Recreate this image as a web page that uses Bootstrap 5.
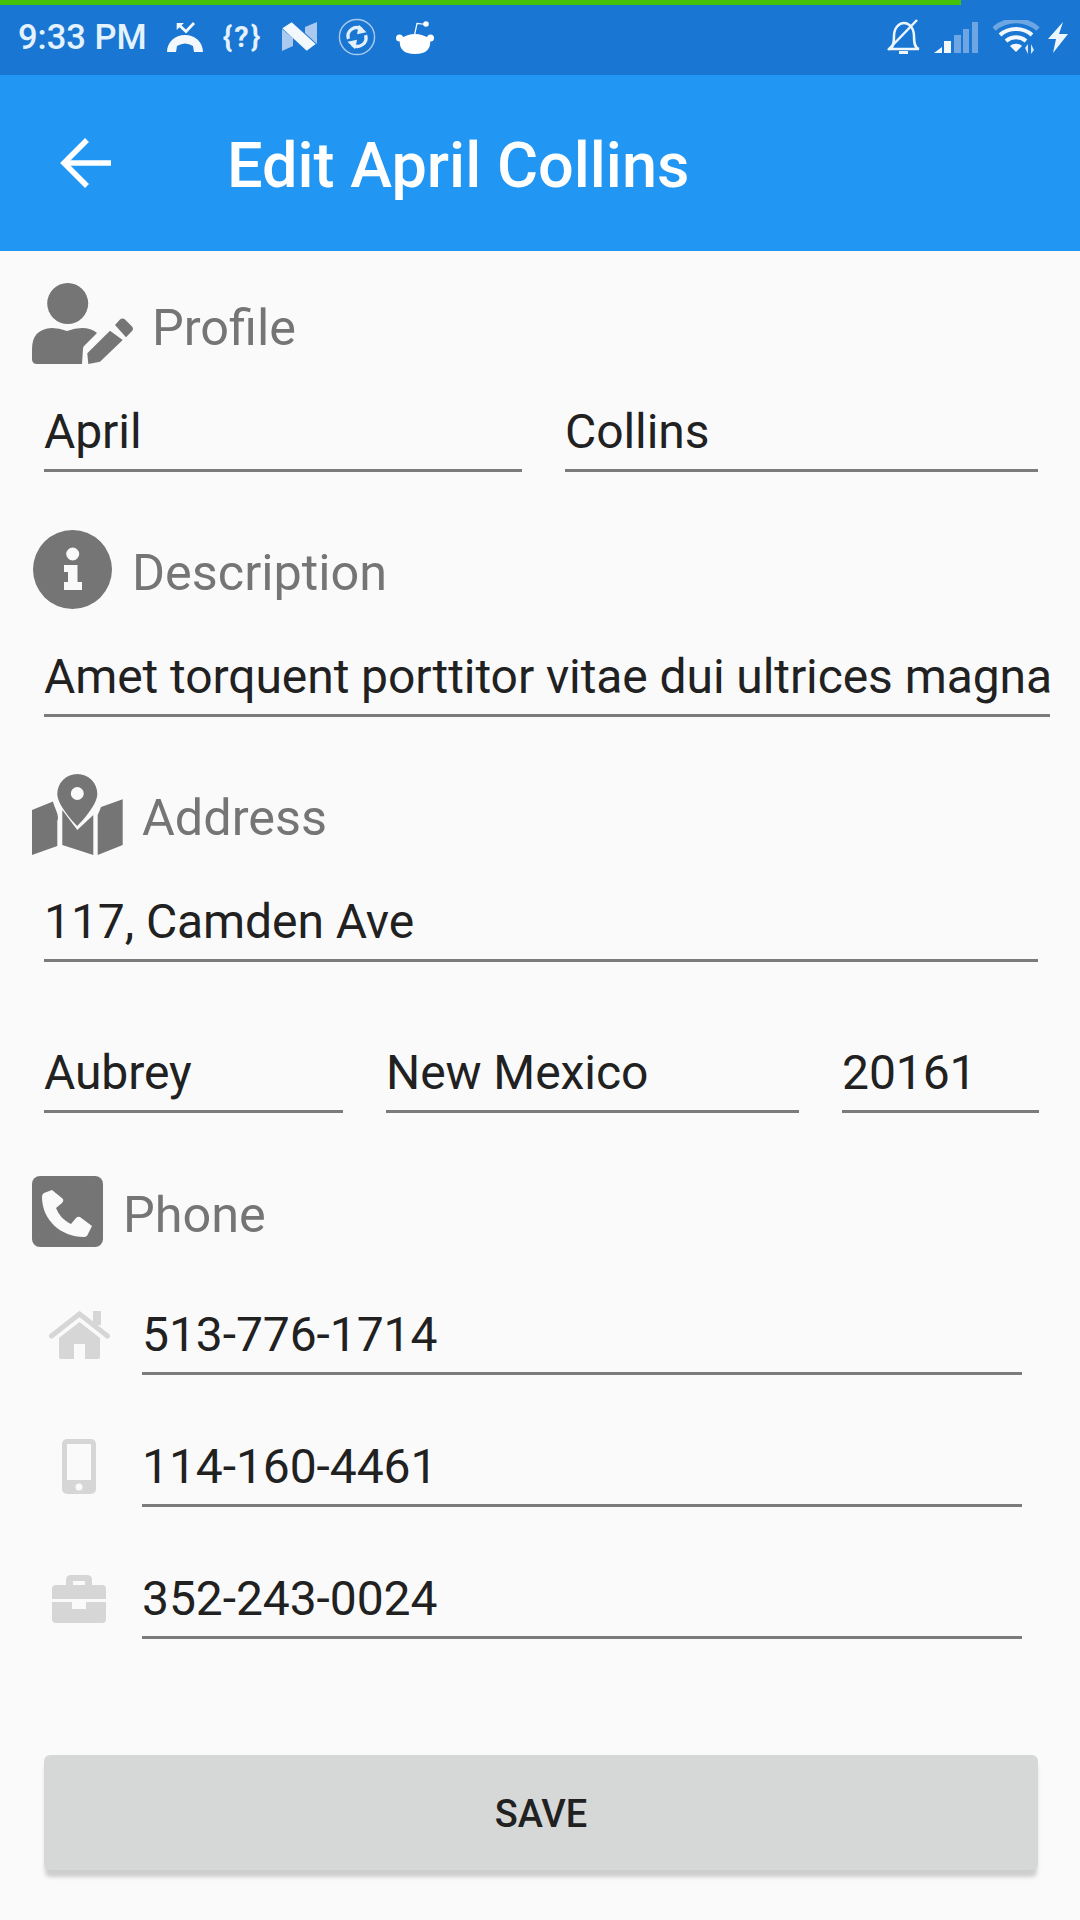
<!DOCTYPE html>
<html lang="en">
<head>
  <meta charset="UTF-8">
  <title>Edit April Collins</title>
  <link href="https://cdn.jsdelivr.net/npm/bootstrap@5.3.0/dist/css/bootstrap.min.css" rel="stylesheet">
  <style>
    body { background: #fafafa; font-family: Roboto, sans-serif; width: 1080px; height: 1920px; overflow: hidden; }
    .status-wrap { background: #1976d2; height: 75px; }
    .load-bar { background: #46c10a; height: 5px; width: 961px; }
    .status-row { height: 70px; padding: 0 12px 6px 18px; color: #e3f2fd; }
    .status-left { gap: 20px; }
    .status-time { font-size: 34.5px; font-weight: 500; line-height: 1; }
    .status-tag { font-size: 29px; font-weight: 700; line-height: 1; letter-spacing: 2px; }
    .gap-sm { margin-left: 8px; }
    .gap-md { margin-left: 13px; }
    .gap-lg { margin-left: 15px; }
    .app-bar { background: #2196f3; height: 176px; padding: 0 0 0 60px; color: #fff; flex-wrap: nowrap; justify-content: flex-start; }
    .app-title { font-size: 63px; font-weight: 500; margin: 5px 0 0 116px; line-height: 1; }
    .sheet { padding: 28px 42px 0 44px; }
    .sec-head { height: 90px; margin-left: -12px; color: #757575; font-size: 50.4px; gap: 20px; }
    .sec-head span { padding-top: 7px; }
    .sec-head svg, .line-icon svg { display: block; }
    .head-info { margin-left: 1px; }
    .head-profile { margin-right: -2px; }
    .head-map { margin-right: -1px; }
    .field-line.form-control { background: transparent; border: 0; border-bottom: 3px solid #7b7b7b; border-radius: 0; padding: 0 0 9px; height: 69px; line-height: 57px; font-size: 48px; letter-spacing: -.08px; color: #212121; white-space: nowrap; box-shadow: none; }
    .gap-fields { gap: 43px; }
    .w-first { width: 478px; flex: none; }
    .w-city { width: 299px; flex: none; }
    .w-state { width: 413px; flex: none; }
    .w-zip { width: 197px; flex: none; }
    .field-line.over-right { width: 1006px; }
    .after-head { margin-top: 34px; }
    .after-field { margin-top: 52px; }
    .after-addr { margin-top: 82px; }
    .head-phone { margin-top: 53px; }
    .phone-line { margin-top: 63px; margin-right: 16px; }
    .phone-line.first-line { margin-top: 50px; }
    .line-icon { width: 98px; flex: none; }
    .icon-home { margin: 5px 0 0 5px; }
    .icon-mobile { margin: 1px 0 0 18px; }
    .icon-case { margin: 5px 0 0 8px; }
    .btn.save-btn { background: #d6d7d7; color: #212121; border: 0; border-radius: 6px; height: 115px; padding-top: 10px; font-size: 38px; font-weight: 500; margin-top: 116px; box-shadow: 0 8px 4px -1px rgba(0,0,0,.18); }
  </style>
</head>
<body>
  <div class="status-wrap">
    <div class="load-bar"></div>
    <div class="status-row d-flex align-items-center">
      <div class="status-left d-flex align-items-center">
        <span class="status-time">9:33 PM</span>
        <svg width="36" height="32" viewBox="0 0 36 32" fill="#f3f8fd"><path d="M11 3L19 10.500L27 2" fill="none" stroke="#f3f8fd" stroke-width="2.800"/><path d="M9.700 2H17L9.700 9z"/><path d="M0 31C0 21 8 14 18 14S36 21 36 31H27L26 25Q18 20 10 25L9 31H0Z"/></svg>
        <span class="status-tag">{?}</span>
        <svg width="36" height="30" viewBox="0 0 36 30"><path d="M0 7V29L11 24V16Z" fill="#a9c9ee"/><path d="M23 5L35 0V22L23 11Z" fill="#a9c9ee"/><path d="M0.300 6.300L9.700 0.300L33.700 22L24.700 28.700Z" fill="#f3f8fd"/></svg>
        <svg width="38" height="38" viewBox="0 0 40 40" fill="none"><circle cx="20" cy="20" r="18.500" stroke="#a9c9ee" stroke-width="1.500"/><path d="M11 22a9 9 0 0 1 14-10" stroke="#e3f0fc" stroke-width="3.500"/><path d="M22 7l8 8-10 2z" fill="#e3f0fc"/><path d="M29 18a9 9 0 0 1-14 10" stroke="#e3f0fc" stroke-width="3.500"/><path d="M18 33l-8-8 10-2z" fill="#e3f0fc"/></svg>
        <svg width="38" height="33" viewBox="0 0 38 33" fill="#fff"><path d="M4 18Q19 8 34 18Q36 33 19 33Q2 33 4 18Z"/><circle cx="3.500" cy="17" r="3.500"/><circle cx="34.500" cy="17" r="3.500"/><path d="M18.500 14L21 2.500L30 3.500" fill="none" stroke="#fff" stroke-width="1.200"/><circle cx="30" cy="3" r="2.800"/></svg>
      </div>
      <svg class="ms-auto" width="34" height="36" viewBox="0 0 34 36" fill="none" stroke="#eef6fd" stroke-width="2.500"><path d="M2 30c4-1 5-5 5-13 0-8 5-13 10-13s10 5 10 13c0 8 1 12 5 13z"/><path d="M1 31L30 1"/><path d="M12 33.500h9" stroke-width="3"/></svg>
      <svg class="gap-md" width="44" height="31" viewBox="0 0 44 31"><path d="M0 31l8-6v6z" fill="#f3f8fd"/><rect x="10" y="19" width="7" height="12" fill="#f3f8fd"/><rect x="20" y="13" width="7" height="18" fill="#6ea6e3"/><rect x="29" y="7" width="6" height="24" fill="#6ea6e3"/><rect x="38" y="0" width="6" height="31" fill="#6ea6e3"/></svg>
      <svg class="gap-lg" width="47" height="34" viewBox="0 0 47 34" fill="none"><path d="M1 9c12-11 32-11 44 0" stroke="#6ea6e3" stroke-width="5"/><path d="M7 15c9-8 23-8 32 0" stroke="#f3f8fd" stroke-width="4"/><path d="M13 21c6-5 14-5 20 0" stroke="#f3f8fd" stroke-width="4"/><path d="M23 32l-6-6c3-3 9-3 12 0z" fill="#f3f8fd"/><path d="M35 34V24l-3 4zM38 24v10l3-4z" fill="#d6e7f8"/></svg>
      <svg class="gap-sm" width="20" height="31" viewBox="0 0 20 31" fill="#eef6fd"><path d="M15 0L0 17h8L5 31 20 12h-9z"/></svg>
    </div>
  </div>

  <nav class="navbar app-bar">
    <svg width="51" height="50" viewBox="0 0 51 50" fill="none" stroke="#fff" stroke-width="5.500"><path d="M51 25H4"/><path d="M27 2L4 25l23 23"/></svg>
    <span class="app-title">Edit April Collins</span>
  </nav>

  <div class="sheet">
    <div class="sec-head d-flex align-items-center">
      <svg class="head-profile" width="102" height="82" viewBox="0 0 102 82" fill="#757575">
        <circle cx="35.700" cy="20.500" r="20.500"/>
        <path d="M0 76V66Q0 46 20 45Q27 45 35 48Q43 45 50 45Q59 45 65 50L52 63Q51 64 51 66L50 81H5Q0 81 0 76Z"/>
        <path d="M55.300 70.300L78 47.700L90.700 57L68 78.700L56.300 81Z"/>
        <path d="M83 42L88 36.500Q90.500 34.500 93 36.500L100 43.500Q102 46 100 48L94 54.300Z"/>
      </svg>
      <span>Profile</span>
    </div>
    <div class="d-flex gap-fields after-head">
      <div class="form-control field-line w-first">April</div>
      <div class="form-control field-line flex-fill">Collins</div>
    </div>

    <div class="sec-head d-flex align-items-center after-field">
      <svg class="head-info" width="79" height="79" viewBox="0 0 79 79" fill="#757575">
        <path fill-rule="evenodd" d="M39.500 0a39.500 39.500 0 1 0 0 79a39.500 39.500 0 1 0 0-79zM39.700 17.500a6.500 6.500 0 1 1 0 13a6.500 6.500 0 1 1 0-13zM31 35H44.500V52H49V60H31V52H35V42H31Z"/>
      </svg>
      <span>Description</span>
    </div>
    <div class="form-control field-line over-right after-head">Amet torquent porttitor vitae dui ultrices magna</div>

    <div class="sec-head d-flex align-items-center after-field">
      <svg class="head-map" width="91" height="81" viewBox="0 0 91 81" fill="#757575">
        <path fill-rule="evenodd" d="M45.300 0a20 20 0 0 1 20 20c0 10-14 26-20 32c-6-6-20-22-20-32a20 20 0 0 1 20-20zM45.300 13a6.500 6.500 0 1 0 0 13a6.500 6.500 0 1 0 0-13z"/>
        <path d="M0 36L21 27.500C22 33 28 42 25.300 47V72L0 81Z"/>
        <path d="M30.300 36L45.300 56L61.300 41V81L30.300 71Z"/>
        <path d="M65.700 41C67 38 68 36 69 33L90.700 25.300V71L65.700 81Z"/>
      </svg>
      <span>Address</span>
    </div>
    <div class="form-control field-line after-head">117, Camden Ave</div>

    <div class="d-flex gap-fields after-addr">
      <div class="form-control field-line w-city">Aubrey</div>
      <div class="form-control field-line w-state">New Mexico</div>
      <div class="form-control field-line w-zip">20161</div>
    </div>

    <div class="sec-head d-flex align-items-center head-phone">
      <svg width="71" height="71" viewBox="0 0 71 71">
        <rect width="71" height="71" rx="8" fill="#757575"/>
        <path fill="#fafafa" d="M20 14L12 17Q10 18 10 21C10 44 29 61 52 61Q55 61 56 58L60 50L48 41Q46 40 44 42L39 48C31 44 27 39 24 32L30 27Q32 25 31 23Z"/>
      </svg>
      <span>Phone</span>
    </div>

    <div class="d-flex align-items-start phone-line first-line">
      <div class="line-icon">
        <svg class="icon-home" width="61" height="48" viewBox="0 0 61 48" fill="#d6d6d6">
          <rect x="44" y="0" width="8" height="14"/>
          <path d="M2.500 25L30.500 3L58.500 25" fill="none" stroke="#d6d6d6" stroke-width="5" stroke-linecap="round"/>
          <path d="M30.500 11L51 27V46q0 2-2 2H36V33H25V48H12q-2 0-2-2V27Z"/>
        </svg>
      </div>
      <div class="form-control field-line">513-776-1714</div>
    </div>
    <div class="d-flex align-items-start phone-line">
      <div class="line-icon">
        <svg class="icon-mobile" width="34" height="55" viewBox="0 0 34 55">
          <rect width="34" height="55" rx="5" fill="#d6d6d6"/>
          <rect x="5" y="5" width="24" height="36" fill="#fafafa"/>
          <circle cx="17" cy="48" r="3.500" fill="#fafafa"/>
        </svg>
      </div>
      <div class="form-control field-line">114-160-4461</div>
    </div>
    <div class="d-flex align-items-start phone-line">
      <div class="line-icon">
        <svg class="icon-case" width="54" height="48" viewBox="0 0 54 48" fill="#d6d6d6">
          <path fill-rule="evenodd" d="M19 0h16q5 0 5 5v5H33V6H21v4H14V5q0-5 5-5z"/>
          <path d="M4 10h46q4 0 4 4v10H0V14q0-4 4-4z"/>
          <path d="M0 27h20v7h14v-7h20v17q0 4-4 4H4q-4 0-4-4z"/>
        </svg>
      </div>
      <div class="form-control field-line">352-243-0024</div>
    </div>

    <button type="button" class="btn save-btn w-100">SAVE</button>
  </div>
</body>
</html>
